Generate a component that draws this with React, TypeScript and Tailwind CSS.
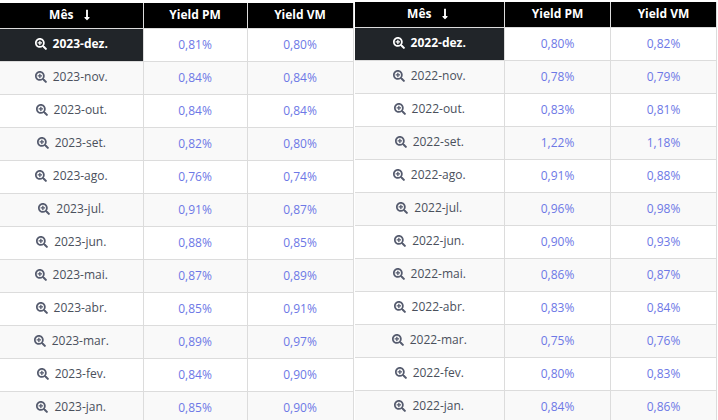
import { FaSearchPlus, FaLongArrowAltDown } from "react-icons/fa";

type Row = { mes: string; pm: string; vm: string };

const rows2023: Row[] = [
  { mes: "2023-dez.", pm: "0,81%", vm: "0,80%" },
  { mes: "2023-nov.", pm: "0,84%", vm: "0,84%" },
  { mes: "2023-out.", pm: "0,84%", vm: "0,84%" },
  { mes: "2023-set.", pm: "0,82%", vm: "0,80%" },
  { mes: "2023-ago.", pm: "0,76%", vm: "0,74%" },
  { mes: "2023-jul.", pm: "0,91%", vm: "0,87%" },
  { mes: "2023-jun.", pm: "0,88%", vm: "0,85%" },
  { mes: "2023-mai.", pm: "0,87%", vm: "0,89%" },
  { mes: "2023-abr.", pm: "0,85%", vm: "0,91%" },
  { mes: "2023-mar.", pm: "0,89%", vm: "0,97%" },
  { mes: "2023-fev.", pm: "0,84%", vm: "0,90%" },
  { mes: "2023-jan.", pm: "0,85%", vm: "0,90%" },
];

const rows2022: Row[] = [
  { mes: "2022-dez.", pm: "0,80%", vm: "0,82%" },
  { mes: "2022-nov.", pm: "0,78%", vm: "0,79%" },
  { mes: "2022-out.", pm: "0,83%", vm: "0,81%" },
  { mes: "2022-set.", pm: "1,22%", vm: "1,18%" },
  { mes: "2022-ago.", pm: "0,91%", vm: "0,88%" },
  { mes: "2022-jul.", pm: "0,96%", vm: "0,98%" },
  { mes: "2022-jun.", pm: "0,90%", vm: "0,93%" },
  { mes: "2022-mai.", pm: "0,86%", vm: "0,87%" },
  { mes: "2022-abr.", pm: "0,83%", vm: "0,84%" },
  { mes: "2022-mar.", pm: "0,75%", vm: "0,76%" },
  { mes: "2022-fev.", pm: "0,80%", vm: "0,83%" },
  { mes: "2022-jan.", pm: "0,84%", vm: "0,86%" },
];

const YieldTable = ({
  rows,
  widths,
  className,
}: {
  rows: Row[];
  widths: [string, string, string];
  className: string;
}) => {
  return (
    <table className={"border-collapse table-fixed text-[12px] " + className}>
      <colgroup>
        <col className={widths[0]} />
        <col className={widths[1]} />
        <col className={widths[2]} />
      </colgroup>
      <thead>
        <tr className="h-[25px] bg-black text-white font-extrabold">
          <th className="border-b border-r border-[#dcdcdc] p-0">
            <span className="inline-flex items-center gap-[8px]">
              Mês <FaLongArrowAltDown className="text-[12px]" />
            </span>
          </th>
          <th className="border-b border-r border-[#dcdcdc] p-0">Yield PM</th>
          <th className="border-b border-r border-[#dcdcdc] p-0">Yield VM</th>
        </tr>
      </thead>
      <tbody>
        {rows.map((r, i) => {
          const first = i === 0;
          const bg = first ? "" : i % 2 === 1 ? "bg-[#f9f9f9]" : "bg-white";
          return (
            <tr key={r.mes} className={"h-[33px] " + bg}>
              <td
                className={
                  "border-b border-r border-[#dcdcdc] p-0 text-center " +
                  (first ? "bg-[#212529] text-white font-bold" : "text-[#4a505c]")
                }
              >
                <span className="inline-flex items-center gap-[6px]">
                  <FaSearchPlus className={"text-[12px] " + (first ? "text-white" : "text-[#555b6e]")} />
                  {r.mes}
                </span>
              </td>
              <td className="border-b border-r border-[#dcdcdc] p-0 text-center text-[#6d78e6]">
                {r.pm}
              </td>
              <td className="border-b border-r border-[#dcdcdc] p-0 text-center text-[#6d78e6]">
                {r.vm}
              </td>
            </tr>
          );
        })}
      </tbody>
    </table>
  );
};

export default function App() {
  return (
    <div className="w-[718px] h-[420px] overflow-hidden bg-white flex items-start gap-[1px] font-['Open_Sans',sans-serif]">
      <YieldTable
        rows={rows2023}
        widths={["w-[143px]", "w-[104px]", "w-[106px]"]}
        className="w-[353px] mt-[3px]"
      />
      <YieldTable
        rows={rows2022}
        widths={["w-[150px]", "w-[106px]", "w-[106px]"]}
        className="w-[362px] mt-[2px]"
      />
    </div>
  );
}
